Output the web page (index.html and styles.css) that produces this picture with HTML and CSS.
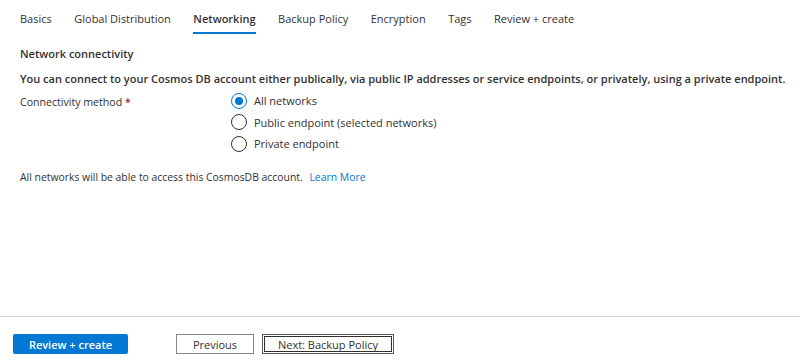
FILE: index.html
```html
<!DOCTYPE html>
<html lang="en">

<head>
    <meta charset="UTF-8">
    <meta name="viewport" content="width=device-width, initial-scale=1.0">
    <title>Create Azure Cosmos DB Account - Networking</title>
    <link rel="stylesheet" href="styles.css">
</head>

<body>
    <div class="wizard">
        <nav class="tabs">
            <a class="tab">Basics</a>
            <a class="tab">Global Distribution</a>
            <a class="tab active">Networking</a>
            <a class="tab">Backup Policy</a>
            <a class="tab">Encryption</a>
            <a class="tab">Tags</a>
            <a class="tab">Review + create</a>
        </nav>

        <div class="content">
            <h3 class="section-title">Network connectivity</h3>
            <p class="section-desc">You can connect to your Cosmos DB account either publically, via public IP addresses or service endpoints, or privately, using a private endpoint.</p>

            <div class="field">
                <div class="field-label">Connectivity method <span class="required">*</span></div>
                <div class="radio-group">
                    <label class="radio checked"><span class="dot"></span>All networks</label>
                    <label class="radio"><span class="dot"></span>Public endpoint (selected networks)</label>
                    <label class="radio"><span class="dot"></span>Private endpoint</label>
                </div>
            </div>

            <p class="info">All networks will be able to access this CosmosDB account. <a class="link">Learn More</a></p>
        </div>

        <footer class="footer">
            <button class="btn primary">Review + create</button>
            <button class="btn secondary prev">Previous</button>
            <button class="btn secondary focused">Next: Backup Policy</button>
        </footer>
    </div>
</body>

</html>
```

FILE: styles.css
```css
* {
    margin: 0;
    padding: 0;
    box-sizing: border-box;
}

body {
    font-family: 'Open Sans', 'Noto Sans', sans-serif;
    font-size: 11px;
    color: #323130;
    background: #fff;
}

.wizard {
    height: 362px;
    display: flex;
    flex-direction: column;
}

.tabs {
    display: flex;
    padding-left: 20px;
    height: 34px;
}

.tab {
    font-size: 11px;
    color: #323130;
    padding-top: 11px;
    margin-right: 22.5px;
    height: 34px;
    border-bottom: 2px solid transparent;
}

.tab.active {
    font-weight: 600;
    border-bottom-color: #0078d4;
}

.content {
    flex: 1;
    padding: 12px 20px 0;
}

.section-title {
    font-size: 11px;
    font-weight: 600;
    line-height: 16px;
    margin-bottom: 9px;
}

.section-desc {
    font-size: 11px;
    font-weight: 600;
    line-height: 16px;
    white-space: nowrap;
    margin-bottom: 6px;
}

.field {
    display: flex;
}

.field-label {
    width: 211px;
    padding-top: 2px;
    font-size: 10.6px;
}

.required {
    color: #a4262c;
    font-weight: 600;
}

.radio-group {
    display: flex;
    flex-direction: column;
    gap: 4.5px;
    margin-top: -1px;
}

.radio {
    display: flex;
    align-items: center;
    height: 17px;
    font-size: 11px;
}

.dot {
    width: 16px;
    height: 16px;
    border: 1px solid #323130;
    border-radius: 50%;
    margin-right: 7px;
    display: flex;
    align-items: center;
    justify-content: center;
}

.radio.checked .dot {
    border-color: #0078d4;
}

.radio.checked .dot::after {
    content: "";
    width: 8px;
    height: 8px;
    border-radius: 50%;
    background: #0078d4;
}

.info {
    margin-top: 18px;
    font-size: 10.4px;
}

.link {
    color: #0078d4;
    margin-left: 4px;
}

.footer {
    border-top: 1px solid #d6d6d6;
    height: 46px;
    display: flex;
    align-items: flex-start;
    padding: 17px 13px 0;
}

.btn {
    font-family: inherit;
    font-size: 11px;
    height: 20px;
    cursor: pointer;
}

.btn.primary {
    background: #0078d4;
    color: #fff;
    font-weight: 600;
    border: none;
    border-radius: 2px;
    width: 115px;
}

.btn.secondary {
    background: #fff;
    color: #323130;
    border: 1px solid #8a8886;
    width: 78px;
}

.btn.prev {
    margin-left: 48px;
}

.btn.focused {
    width: 132px;
    margin-left: 8px;
    border-color: #605e5c;
    outline: 1px solid #323130;
    outline-offset: -3px;
}
```
